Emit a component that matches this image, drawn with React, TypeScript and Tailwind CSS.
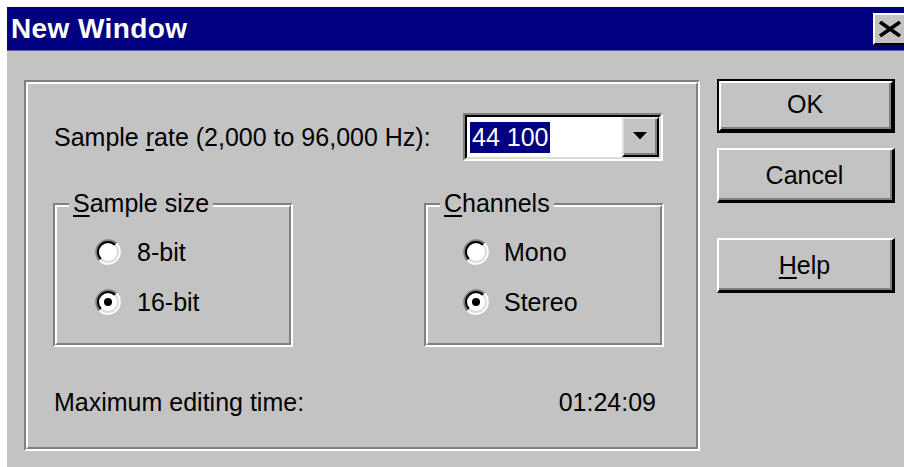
import React from "react";

function Radio({ checked }: { checked?: boolean }) {
  return (
    <svg width="26" height="26" viewBox="0 0 26 26" className="shrink-0">
      <path d="M3.81 22.19 A13 13 0 0 1 22.19 3.81 Z" fill="#808080" />
      <path d="M22.19 3.81 A13 13 0 0 1 3.81 22.19 Z" fill="#ffffff" />
      <path d="M5.22 20.78 A11 11 0 0 1 20.78 5.22 Z" fill="#000000" />
      <path d="M20.78 5.22 A11 11 0 0 1 5.22 20.78 Z" fill="#dcdcdc" />
      <circle cx="13" cy="13" r="9" fill="#ffffff" />
      {checked && <circle cx="13" cy="13" r="4" fill="#000000" />}
    </svg>
  );
}

function RadioRow({ label, checked, gap }: { label: string; checked?: boolean; gap: string }) {
  return (
    <div className={`flex items-center h-[30px] ${gap}`}>
      <Radio checked={checked} />
      <span className="text-[25px] leading-[28px] text-black">{label}</span>
    </div>
  );
}

function GroupBox({
  legend,
  children,
  className,
}: {
  legend: React.ReactNode;
  children: React.ReactNode;
  className?: string;
}) {
  return (
    <div
      className={`relative w-[240px] h-[144px] border-2 border-t-[#808080] border-l-[#808080] border-b-white border-r-white ${className ?? ""}`}
    >
      <div className="h-full border-2 border-t-white border-l-white border-b-[#808080] border-r-[#808080]">
        {children}
      </div>
      <span className="absolute left-[14px] top-[-16px] px-[4px] bg-[#c3c3c3] text-[25px] leading-[28px] text-black">
        {legend}
      </span>
    </div>
  );
}

function DefaultButton({ children }: { children: React.ReactNode }) {
  return (
    <div className="w-[178px] h-[54px] border-2 border-black">
      <div className="h-full border-2 border-t-white border-l-white border-b-black border-r-black">
        <div className="h-full flex items-center justify-center border-b-2 border-r-2 border-b-[#808080] border-r-[#808080] text-[25px] text-black">
          {children}
        </div>
      </div>
    </div>
  );
}

function Button({ children, className }: { children: React.ReactNode; className?: string }) {
  return (
    <div
      className={`w-[178px] h-[55px] border-t-2 border-l-2 border-t-white border-l-white border-b-[3px] border-r-[3px] border-b-black border-r-black ${className ?? ""}`}
    >
      <div className="h-full flex items-center justify-center pt-[3px] border-b-2 border-r-2 border-b-[#808080] border-r-[#808080] text-[25px] text-black">
        {children}
      </div>
    </div>
  );
}

export default function App() {
  return (
    <div className="w-[904px] h-[467px] overflow-hidden bg-white pt-[7px] pl-[7px] font-['Liberation_Sans',Arial,sans-serif]">
      <div className="w-[930px] h-[470px] bg-[#c3c3c3] flex flex-col">
        {/* title bar */}
        <div className="h-[44px] shrink-0 bg-[#000080] border-b border-b-[#5a5aa8] flex items-center justify-between pl-[4px] pr-[20px]">
          <span className="text-white font-bold text-[28px] tracking-[0.4px] leading-none">New Window</span>
          <div className="w-[44px] h-[32px] bg-[#c3c3c3] border-t-2 border-l-2 border-t-white border-l-white border-b-2 border-r-2 border-b-black border-r-black flex items-center pl-[3px]">
            <svg width="24" height="16" viewBox="0 0 24 16">
              <path d="M2 1 L22 15 M22 1 L2 15" stroke="#000" strokeWidth="3.6" />
            </svg>
          </div>
        </div>

        {/* body */}
        <div className="flex pl-[17px] pt-[29px]">
          {/* settings panel */}
          <div className="w-[676px] h-[371px] border-2 border-t-[#808080] border-l-[#808080] border-b-white border-r-white">
            <div className="h-full border-2 border-t-white border-l-white border-b-[#808080] border-r-[#808080] flex flex-col">
              <div className="flex items-center h-[48px] mt-[29px] pl-[26px]">
                <span className="w-[409px] text-[25px] leading-[28px] text-black">
                  Sample <span className="underline underline-offset-[3px]">r</span>ate (2,000 to 96,000 Hz):
                </span>
                <div className="w-[200px] h-[48px] border-2 border-t-[#808080] border-l-[#808080] border-b-white border-r-white">
                  <div className="h-full border-2 border-t-black border-l-black border-b-[#dcdcdc] border-r-[#dcdcdc] bg-white flex items-center pl-[3px]">
                    <span className="h-[31px] bg-[#000080] text-white text-[25px] leading-[31px] px-[2px]">44 100</span>
                    <div className="ml-auto w-[37px] h-full bg-[#c3c3c3] border-t-2 border-l-2 border-t-[#e0e0e0] border-l-[#e0e0e0] border-b-2 border-r-2 border-b-black border-r-black">
                      <div className="h-full flex items-center justify-center border-b-2 border-r-2 border-b-[#808080] border-r-[#808080]">
                        <svg width="14" height="8" viewBox="0 0 14 8">
                          <path d="M0 0 H14 L7 7.5 Z" fill="#000" />
                        </svg>
                      </div>
                    </div>
                  </div>
                </div>
              </div>

              <div className="flex mt-[42px]">
                <GroupBox
                  className="ml-[25px]"
                  legend={
                    <>
                      <span className="underline underline-offset-[3px]">S</span>ample size
                    </>
                  }
                >
                  <div className="flex flex-col gap-[20px] pt-[30px] pl-[38px]">
                    <RadioRow label="8-bit" gap="gap-[16px]" />
                    <RadioRow label="16-bit" checked gap="gap-[16px]" />
                  </div>
                </GroupBox>
                <GroupBox
                  className="ml-[131px]"
                  legend={
                    <>
                      <span className="underline underline-offset-[3px]">C</span>hannels
                    </>
                  }
                >
                  <div className="flex flex-col gap-[20px] pt-[30px] pl-[35px]">
                    <RadioRow label="Mono" gap="gap-[15px]" />
                    <RadioRow label="Stereo" checked gap="gap-[15px]" />
                  </div>
                </GroupBox>
              </div>

              <div className="flex items-center justify-between h-[30px] mt-[40px] ml-[26px] w-[602px] text-[25px] leading-[28px] text-black">
                <span>Maximum editing time:</span>
                <span>01:24:09</span>
              </div>
            </div>
          </div>

          {/* action buttons */}
          <div className="flex flex-col ml-[17px] mt-[-1px]">
            <DefaultButton>OK</DefaultButton>
            <Button className="mt-[15px]">Cancel</Button>
            <Button className="mt-[35px]">
              <span>
                <span className="underline underline-offset-[3px]">H</span>elp
              </span>
            </Button>
          </div>
        </div>
      </div>
    </div>
  );
}
